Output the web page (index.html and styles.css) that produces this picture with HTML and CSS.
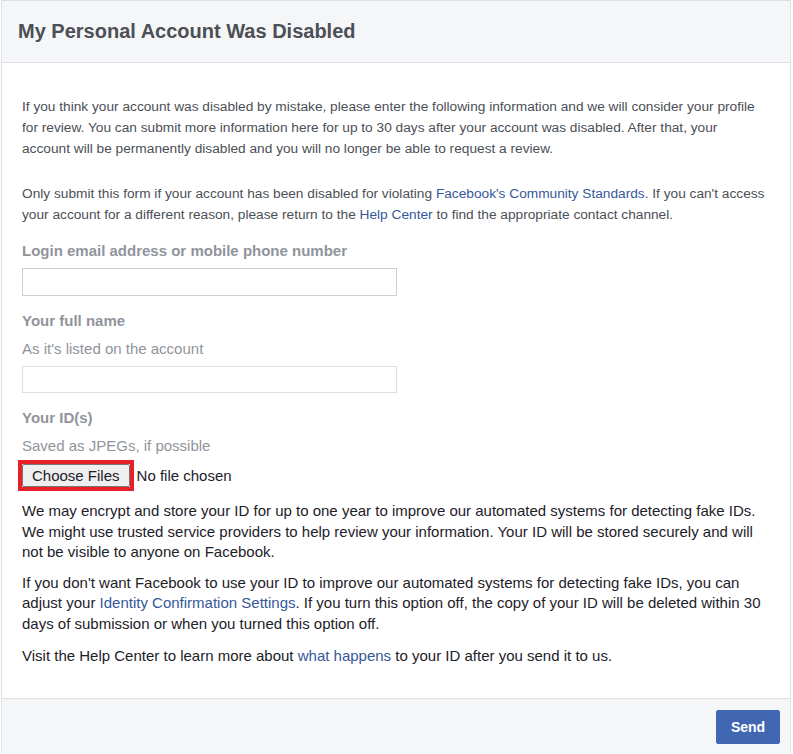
FILE: index.html
```html
<!DOCTYPE html>
<html>
<head>
<meta charset="utf-8">
<link rel="stylesheet" href="styles.css">
</head>
<body>
<div class="panel">
  <div class="header"><h1 class="title">My Personal Account Was Disabled</h1></div>
  <div class="content">
    <p class="intro">If you think your account was disabled by mistake, please enter the following information and we will consider your profile for review. You can submit more information here for up to 30 days after your account was disabled. After that, your account will be permanently disabled and you will no longer be able to request a review.</p>
    <p class="intro second">Only submit this form if your account has been disabled for violating <a class="link" href="#">Facebook's Community Standards</a>. If you can't access your account for a different reason, please return to the <a class="link" href="#">Help Center</a> to find the appropriate contact channel.</p>
    <div class="label first">Login email address or mobile phone number</div>
    <input class="field" type="text">
    <div class="label">Your full name</div>
    <div class="hint">As it's listed on the account</div>
    <input class="field light" type="text">
    <div class="label ids">Your ID(s)</div>
    <div class="hint">Saved as JPEGs, if possible</div>
    <div class="filerow">
      <span class="highlight"><span class="filebtn">Choose Files</span></span>
      <span class="nofile">No file chosen</span>
    </div>
    <p class="body first-body">We may encrypt and store your ID for up to one year to improve our automated systems for detecting fake IDs. We might use trusted service providers to help review your information. Your ID will be stored securely and will not be visible to anyone on Facebook.</p>
    <p class="body">If you don't want Facebook to use your ID to improve our automated systems for detecting fake IDs, you can adjust your <a class="link" href="#">Identity Confirmation Settings</a>. If you turn this option off, the copy of your ID will be deleted within 30 days of submission or when you turned this option off.</p>
    <p class="body last">Visit the Help Center to learn more about <a class="link" href="#">what happens</a> to your ID after you send it to us.</p>
  </div>
  <div class="footer"><button class="send">Send</button></div>
</div>
</body>
</html>
```
FILE: styles.css
```css
html, body {
  margin: 0;
  padding: 0;
  background: #fff;
}
body {
  font-family: "Liberation Sans", Arial, sans-serif;
  color: #4b4f56;
}
.panel {
  margin-left: 1px;
  width: 788px;
  border: 1px solid #dddfe2;
  border-bottom: none;
}
.header {
  background: #f5f6f7;
  border-bottom: 1px solid #dddfe2;
  height: 61px;
  display: flex;
  align-items: center;
  padding-left: 16px;
}
.title {
  margin: 0;
  font-size: 20px;
  font-weight: bold;
  color: #4b4f56;
}
.content {
  padding: 33px 24px 31px 20px;
}
.intro {
  margin: 0;
  font-size: 13.7px;
  line-height: 21px;
  color: #4b4f56;
}
.intro.second {
  margin-top: 24px;
}
.link {
  color: #365899;
  text-decoration: none;
}
.label {
  font-size: 15px;
  font-weight: bold;
  color: #90949c;
  line-height: 21px;
  margin-top: 14px;
}
.label.first {
  margin-top: 15px;
}
.label.ids {
  margin-top: 14px;
}
.hint {
  font-size: 15px;
  color: #90949c;
  line-height: 21px;
  margin-top: 7px;
}
.field {
  display: block;
  box-sizing: border-box;
  width: 375px;
  height: 28px;
  margin: 7px 0 0 0;
  border: 1px solid #ccd0d5;
  background: #fff;
  padding: 0 6px;
}
.field.light {
  height: 27px;
  border-color: #dddfe2;
  margin-top: 7px;
}
.filerow {
  display: flex;
  align-items: center;
  margin-top: 4px;
  margin-left: -4px;
  font-size: 15px;
  color: #1d2129;
}
.highlight {
  display: inline-flex;
  border: 4px solid #e8202a;
  padding: 0;
}
.filebtn {
  display: inline-block;
  background: #efefef;
  border: 1px solid #767676;
  border-radius: 2px;
  padding: 2px 9px;
  line-height: 17px;
  font-size: 15px;
  color: #1d2129;
}
.nofile {
  margin-left: 3px;
}
.body {
  margin: 10px 0 0 0;
  font-size: 15px;
  line-height: 20.5px;
  color: #1d2129;
}
.body.first-body {
  margin-top: 10px;
}
.body.last {
  margin-top: 12px;
}
.footer {
  background: #f5f6f7;
  border-top: 1px solid #dddfe2;
  height: 60px;
  display: flex;
  justify-content: flex-end;
  align-items: flex-start;
  padding: 11px 10px 0 0;
  box-sizing: border-box;
}
.send {
  background: #4267b2;
  border: 1px solid #4267b2;
  border-radius: 2px;
  color: #fff;
  font-family: "Liberation Sans", Arial, sans-serif;
  font-weight: bold;
  font-size: 14px;
  height: 34px;
  width: 64px;
  padding: 0;
}
```
